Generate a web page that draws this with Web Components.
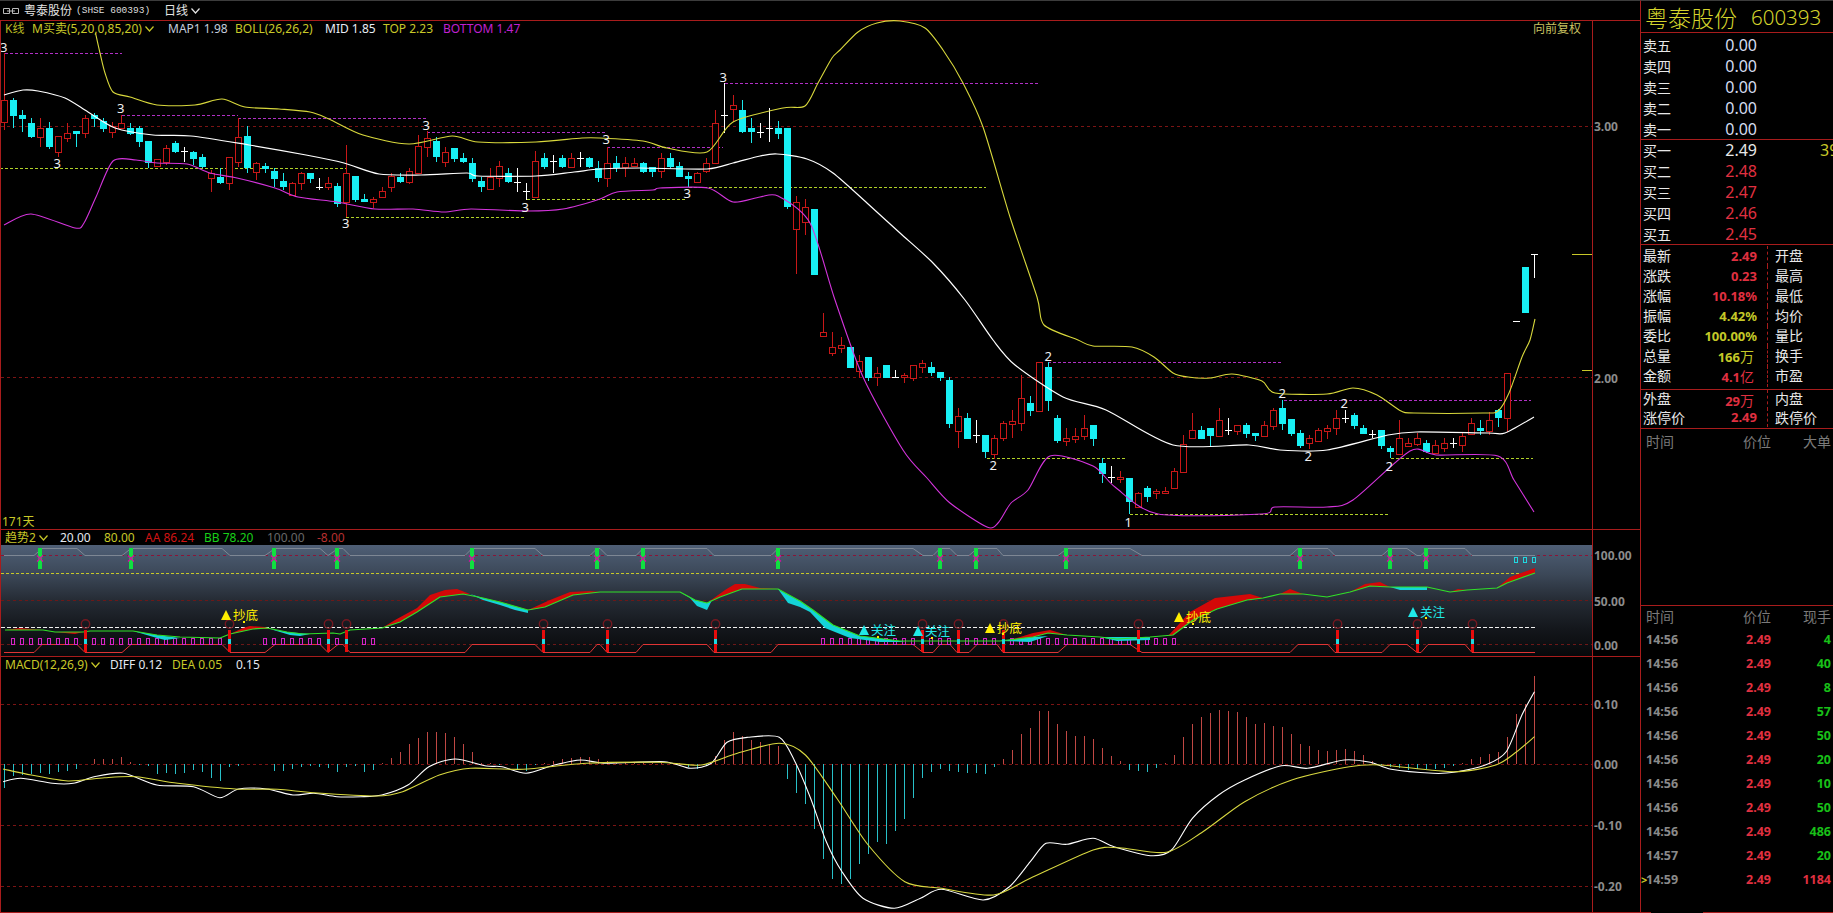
<!DOCTYPE html>
<html lang="zh"><head><meta charset="utf-8"><title>粤泰股份</title>
<style>html,body{margin:0;padding:0;background:#000;overflow:hidden}</style></head>
<body>
<ts-app></ts-app>
<script>
const FONT='"Noto Sans","Noto Sans CJK SC",sans-serif';
const RED='#a81c1c', DRED='#7c1414', YEL='#c8c828';
const chev=(c='#c8c828')=>`<svg width="9" height="6" viewBox="0 0 9 6" style="display:inline-block;vertical-align:1px;margin-left:3px"><path d="M.5 .5L4.5 5L8.5 .5" fill="none" stroke="${c}" stroke-width="1.2"/></svg>`;
function comp(name,fn){customElements.define(name,class extends HTMLElement{constructor(){super();this.attachShadow({mode:'open'}).innerHTML=fn(this)}})}
const H=(y,x1,x2,c,d)=>`<path d="M${x1} ${Math.floor(y)+.5}H${x2}" stroke="${c}" fill="none" ${d?`stroke-dasharray="${d}"`:''}/>`;
const poly=(p,c,w=1)=>`<polyline points="${p.map(a=>a.join(',')).join(' ')}" fill="none" stroke="${c}" stroke-width="${w}" stroke-linejoin="round"/>`;
const smooth=(p,c,w=1,k=.8)=>{let d=`M${p[0][0]} ${p[0][1]}`;for(let i=0;i<p.length-1;i++){const a=p[i-1]||p[i],b=p[i],e=p[i+1],f=p[i+2]||e;
 const c1=[b[0]+(e[0]-a[0])/6*k,b[1]+(e[1]-a[1])/6*k],c2=[e[0]-(f[0]-b[0])/6*k,e[1]-(f[1]-b[1])/6*k];
 d+=`C${c1[0].toFixed(1)} ${c1[1].toFixed(1)} ${c2[0].toFixed(1)} ${c2[1].toFixed(1)} ${e[0]} ${e[1]}`}
 return `<path d="${d}" fill="none" stroke="${c}" stroke-width="${w}" stroke-linejoin="round"/>`};
const fill=(p,c)=>`<polygon points="${p.map(a=>a.join(',')).join(' ')}" fill="${c}"/>`;
const T=(x,y,s,c,o='')=>`<text x="${x}" y="${y}" fill="${c}" dominant-baseline="central" ${o}>${s}</text>`;
const axis=(y,s)=>T(1594,y,s,'#8c8c8c','font-size="12" font-weight="700"');
const frame=(y1,y2)=>`<path d="M.5 ${y1}V${y2}M1592.5 ${y1}V${y2}" stroke="${RED}"/>`;

/* ---------- candle data (measured in 1/3 px with a group offset) ---------- */
const groups=[[0,[
['r',300,365,160,390],['c',300,348,295,385],['c',345,356,330,395],['c',368,412,355,415],['r',385,410,355,440],['c',384,442,365,447],['r',408,455,408,470],['r',400,415,368,425],['c',393,401,393,440],['r',355,400,345,415],['c',345,356,340,380],['c',362,386,355,395],['r',378,395,365,415],['r',370,383,345,385],['c',385,402,370,405],['c',385,425,378,440],['c',423,490,423,505],['r',476,498,476,500],['r',445,485,435,495],['c',430,455,422,458],['d',452,442,485],['c',455,477,452,495],['c',470,500,462,505],['r',520,535,510,575],['c',530,550,505,552],['r',470,550,470,570],['r',410,485,355,500],['c',408,505,378,520],['r',490,515,485,540],['c',498,507,490,520],['c',513,537,505,560],['c',544,560,520,570],['r',550,585,545,585],['r',520,550,515,570],['c',520,537,518,550],['d',560,535,570],['r',550,560,530,570],['c',558,612,548,620],['r',520,605,435,650],['c',528,600,528,605],['c',597,605,583,607],['r',598,605,590,625],['r',573,590,560,590],['r',528,560,520,575],['c',530,546,520,550],['r',513,545,505,552],['r',438,520,405,522],['r',415,440,393,470],['c',423,470,410,485],['r',455,485,440,500],['c',445,478,445,485],['c',474,487,460,490],['c',490,536,475,545],['c',543,560,530,575],['r',530,568,505,570],['r',498,535,483,560],['c',520,545,505,550],['d',545,505,575],['d',574,550,600],['r',484,590,453,592],['c',475,500,460,507],['d',484,465,520],['c',474,500,465,505],['r',475,500,460,505],['d',474,455,500],['c',474,500,470,505],['c',505,535,483,545]]],
[50,[
['r',340,385,290,410],['c',340,355,318,365],['r',340,352,320,380],['r',340,349,325,352],['c',340,365,335,370],['c',352,365,350,380],['r',325,363,310,385],['c',325,350,310,355],['c',348,380,335,380],['c',378,386,365,410],['r',370,395,365,395],['r',340,363,325,370],['r',220,340,180,342],['d',196,100,250],['r',165,176,135,215],['c',180,245,150,250],['c',235,245,205,280],['d',245,220,265],['d',235,175,275],['c',235,252,213,268],['c',235,470,235,478],['r',455,538,438,672],['r',470,515,448,555],['c',478,675,478,675]]],
[300,[
['r',97,107,40,107],['r',142,158,95,168],['r',135,143,110,160],['c',142,203,142,203],['r',182,212,165,235],['c',172,233,172,242],['r',218,232,200,258],['c',196,233,196,233],['d',232,210,233],['r',226,232,218,250],['r',196,233,195,243],['r',188,202,180,220],['c',202,218,187,228],['c',217,233,217,242],['c',240,372,232,385],['r',347,392,325,445],['c',354,416,340,416],['d',405,360,430],['c',406,455,406,475],['r',415,462,405,478],['r',370,415,362,423],['r',362,371,330,415],['r',295,370,225,392],['c',310,332,287,347]]],
[340,[
['r',67,212,67,212],['c',82,182,67,212],['c',235,303,225,310],['r',295,303,265,317],['r',287,297,265,310],['r',265,287,225,300],['c',255,297,255,317],['c',370,402,355,430],['d',410,378,430],['r',410,417,392,430],['c',415,485,415,522],['r',460,500,455,503],['c',443,470,437,485],['r',454,460,447,478],['r',452,460,442,462],['r',393,445,385,447],['r',312,395,285,400],['r',270,295,220,297],['c',270,297,258,297],['c',264,288,264,318],['r',240,287,205,287],['d',270,235,285],['r',256,272,256,285],['c',255,282,250,295],['c',280,288,280,302],['r',255,287,242,292],['r',210,257,205,270],['c',204,252,180,270],['c',238,282,238,287],['c',278,318,270,325],['r',295,310,285,327],['r',270,302,265,305],['r',265,272,255,297],['r',235,265,210,285],['d',235,210,250],['c',225,257,220,267],['c',264,282,255,282],['d',282,270,295],['c',270,318,270,327],['c',324,336,318,355],['r',295,342,240,342],['r',310,317,295,320],['r',295,312,280,317],['c',308,336,300,340],['r',316,340,300,342],['r',310,325,295,335],['d',310,295,325],['r',287,316,280,337],['r',250,282,235,285],['c',264,273,240,285],['r',240,272,215,285],['c',210,235,208,260],['r',98,235,98,275],
['d',-57,-57,-57],['c',-219,-81,-219,-81],['d',-258,-258,-186]]]];
function candles(){
  let s='',i=0;
  for(const [off,rows] of groups)for(const r of rows){
    const X=4+9*i++, t=Math.round(off+r[1]/3), b=Math.round(off+r[2]/3);
    const wt=Math.round(off+r[r[0]=='d'?2:3]/3), wb=Math.round(off+r[r[0]=='d'?3:4]/3);
    if(r[0]=='r'){
      s+=`<rect x="${X}" y="${wt}" width="1" height="${Math.max(wb-wt,1)}" fill="#c81818"/><rect x="${X-2.5}" y="${t+.5}" width="6" height="${Math.max(b-t,2)}" fill="#000" stroke="#c81818"/>`;
    }else if(r[0]=='c'){
      s+=`<rect x="${X}" y="${wt}" width="1" height="${Math.max(wb-wt,1)}" fill="#1ce8ec"/><rect x="${X-3}" y="${t}" width="7" height="${Math.max(b-t,2)}" fill="#18f0f4"/>`;
    }else{
      s+=`<rect x="${X}" y="${wt}" width="1" height="${Math.max(wb-wt,1)}" fill="#fff"/><rect x="${X-3}" y="${t}" width="7" height="1" fill="#fff"/>`;
    }
  }
  return `<g shape-rendering="crispEdges">${s}</g>`;
}
const TOP=[[95.5,33],[100,53],[105,73],[113,92],[130,97],[157,105],[195,105],[222,99],[245,107],[279,109],[310,112],[329,119],[363,135],[409,144],[452,136],[478,142],[536,142],[582,138],[600,138],[643,141],[667,148],[707,152],[733,122],[783,108],[805,106],[818,83],[832,58],[840,50],[858,32],[877,23],[900,21],[925,28],[943,50],[963,83],[983,127],[1010,217],[1037,297],[1044,325],[1078,340],[1093,346],[1132,347],[1154,357],[1173,373],[1188,377],[1210,378],[1232,374],[1262,381],[1275,393],[1327,394],[1353,388],[1377,395],[1401,411],[1414,413],[1483,413],[1498,411],[1509,393],[1522,357],[1530,340],[1535,319]];
const MID=[[4,95],[23,90],[38,91],[65,98],[88,112],[115,128],[153,135],[191,136],[249,145],[306,155],[344,163],[379,174],[421,175],[467,173],[478,176],[536,176],[574,172],[600,169],[640,168],[707,169],[733,163],[760,156],[777,154],[807,159],[833,173],[867,203],[900,233],[933,263],[965,300],[993,340],[1015,365],[1063,397],[1106,410],[1173,445],[1249,445],[1280,450],[1327,450],[1388,435],[1416,432],[1488,433],[1505,433],[1534,417]];
const BOT=[[4,225],[31,214],[75,228],[84,223],[96,197],[113,161],[136,160],[157,163],[187,164],[210,173],[237,178],[275,188],[298,197],[337,202],[375,209],[413,209],[444,212],[471,209],[528,211],[563,209],[600,199],[617,192],[653,190],[660,188],[708,188],[733,202],[760,197],[778,196],[810,223],[835,300],[863,377],[903,450],[927,478],[950,503],[987,527],[998,523],[1011,503],[1028,490],[1050,456],[1093,466],[1115,487],[1158,514],[1262,514],[1275,507],[1327,507],[1353,500],[1410,451],[1436,455],[1498,456],[1514,480],[1534,512]];
const DM='#b030c4', DG='#b0d028';
const DASH=[[5,122,53,DM],[122,238,115,DM],[238,426,118,DM],[427,605,132,DM],[607,723,147,DM],[725,1039,83,DM],[1048,1282,362,DM],[1284,1531,400,DM],
[0,346,168,DG],[346,524,217,DG],[527,687,199,DG],[689,986,187,DG],[987,1126,458,DG],[1130,1390,514,DG],[1391,1533,458,DG]];
const NUMS=[[3.5,47,3],[120.5,108,3],[57,163,3],[345.6,223,3],[426,125,3],[525,207,3],[723,77,3],[606,139,3],[687,193,3],[993,465,2],[1048,356,2],[1128,522,1],[1282,393,2],[1308,456,2],[1344,403,2],[1389,466,2]];

comp('ts-legend',()=>`<style>:host{display:flex;align-self:start;height:16px;padding-left:5px;font:12px/16px ${FONT};white-space:nowrap;z-index:1}
::slotted(span){flex:none}</style><slot></slot>`);

const items=a=>a.map(([w,c,s])=>`<span style="width:${w}px;color:${c}">${s}</span>`).join('');

comp('ts-titlebar',()=>`<style>:host{display:flex;align-items:center;height:19px;flex:none;border-bottom:1px solid ${RED};font:12px/19px ${FONT};color:#e4e4e4;white-space:nowrap}
.i{margin:0 5px 0 3px;display:block}.m{font:9.5px "Liberation Mono",monospace;margin-left:4px;width:88px;color:#ddd}</style>
<svg class="i" width="16" height="8" viewBox="0 0 16 8"><path d="M.5 1.5h6v5h-6zM9.5 1.5h6v5h-6zM4 4h8" fill="none" stroke="#bbb"/></svg>
<span>粤泰股份</span><span class="m">(SHSE 600393)</span><span>日线</span>${chev('#e4e4e4')}`);

comp('ts-kline',()=>`<style>:host{display:grid;height:508px;flex:none;border-bottom:1px solid ${RED}}
:host>*{grid-area:1/1}svg{display:block;overflow:visible;font-family:${FONT}}
.r{margin-left:auto;font-size:12px;color:#c8c060;width:59px;white-space:nowrap}
ts-legend{width:1587px}</style>
<svg width="1640" height="508" viewBox="0 21 1640 508">
${H(126,1,1592,DRED,'3 3')}${H(377,1,1592,DRED,'3 3')}
${DASH.map(d=>H(d[2],d[0],d[1],d[3],'3 2')).join('')}
${candles()}
${smooth(TOP,'#d8d83c',1.1)}${smooth(MID,'#fff',1.2)}${smooth(BOT,'#d434dc',1.1)}
${NUMS.map(n=>T(n[0]-3.5,n[1],n[2],'#f0f0f0','font-size="13"')).join('')}
${T(2,521,'171天',YEL,'font-size="12"')}
${frame(21,529)}
${axis(126,'3.00')}${axis(378,'2.00')}
${H(254,1572,1592,YEL)}${H(370,1582,1592,YEL)}
</svg>
<ts-legend>${items([[27,'#b8b820','K线'],[136,YEL,'M买卖(5,20,0,85,20)'+chev()],[67,'#c4ccdc','MAP1 1.98'],[90,YEL,'BOLL(26,26,2)'],[58,'#e8ecf4','MID 1.85'],[60,YEL,'TOP 2.23'],[90,'#c020d0','BOTTOM 1.47']])}<span class="r">向前复权</span></ts-legend>`);

/* indicator */
const SIG=[40,131,274,337,472,597,643,778,940,976,1066,1300,1390,1426];
const PINS=[85,229,328,346,543,607,715,922,958,1003,1138,1337,1417,1472];
const GRAY=[[4,0],[34,0],[42,1],[77,1],[85,0],[122,0],[131,1],[222,1],[230,0],[265,0],[275,1],[320,1],[328,0],[338,1],[343,1],[350,0],[465,0],[472,1],[535,1],[543,0],[590,0],[597,1],[600,1],[607,0],[636,0],[643,1],[707,1],[714,0],[771,0],[778,1],[913,1],[923,0],[933,0],[940,1],[950,1],[957,0],[969,0],[977,1],[997,1],[1003,0],[1058,0],[1067,1],[1130,1],[1142,0],[1290,0],[1298,1],[1328,1],[1335,0],[1382,0],[1390,1],[1407,1],[1417,0],[1421,0],[1428,1],[1465,1],[1472,0],[1535,0]];
const BB=[[5,630],[43,630],[55,632],[83,632],[90,631],[133,631],[157,635],[180,637],[220,638],[230,634],[253,629],[267,628],[287,632],[303,634],[333,633],[340,634],[350,630],[382,628],[400,622],[417,612],[440,597],[463,594],[483,598],[500,602],[528,610],[545,607],[573,595],[600,592],[680,592],[695,600],[707,603],[720,597],[742,589],[778,589],[800,601],[813,610],[833,625],[860,636],[900,641],[1000,641],[1033,637],[1048,633],[1067,635],[1100,637],[1117,639],[1150,637],[1173,635],[1193,620],[1217,609],[1247,600],[1263,598],[1280,594],[1303,594],[1327,597],[1350,592],[1370,586],[1390,587],[1427,587],[1450,592],[1467,590],[1497,588],[1507,583],[1535,573]];
const RF=[[[5,630],[20,628],[43,630]],[[55,632],[75,634],[83,632]],[[230,634],[243,628],[250,626],[265,627],[270,629],[253,629]],[[382,628],[395,620],[417,608],[430,595],[445,590],[457,589],[470,594],[463,594],[440,597],[417,612],[400,622]],[[528,610],[550,600],[570,592],[590,591],[600,592],[573,595],[545,607]],[[707,603],[725,590],[735,584],[745,584],[760,588],[778,589],[742,589],[720,597]],[[1010,640],[1033,633],[1050,630],[1067,635],[1048,633],[1033,637]],[[1168,636],[1190,612],[1215,598],[1250,594],[1263,598],[1247,600],[1217,609],[1193,620],[1173,635]],[[1280,594],[1290,589],[1303,594]],[[1350,592],[1365,584],[1380,582],[1390,587],[1370,586]],[[1450,592],[1458,589],[1467,590]],[[1497,588],[1510,577],[1535,568],[1535,573],[1507,583]]];
const CF=[[[133,631],[157,638],[165,640],[180,638],[157,635]],[[270,629],[290,635],[300,636],[310,634],[287,632]],[[470,594],[483,600],[500,605],[515,610],[528,613],[528,610],[500,602],[483,598]],[[680,592],[690,598],[697,606],[707,610],[712,600],[707,603],[695,600]],[[778,589],[788,603],[800,607],[810,612],[825,628],[850,638],[880,642],[905,642],[900,641],[860,636],[833,625],[813,610],[800,601]],[[1000,641],[1030,642],[1048,636],[1033,637]],[[1100,637],[1117,641],[1150,640],[1150,637]],[[1390,587],[1400,590],[1427,590],[1427,587]]];
const MAG=[13,22,31,40,49,58,67,76];for(let x=94;x<=220;x+=9)MAG.push(x);for(let x=265;x<=319;x+=9)MAG.push(x);MAG.push(337,364,373);
for(let x=823;x<=913;x+=9)MAG.push(x);MAG.push(931,940,949,967,976,985,994);for(let x=1012;x<=1129;x+=9)MAG.push(x);MAG.push(1147,1156,1165,1174);
const tags=[[226,615,'抄底','#ffee00',1],[864,630,'关注','#20e8e8',0],[918,631,'关注','#20e8e8',0],[990,628,'抄底','#ffee00',1],[1179,617,'抄底','#ffee00',1],[1413,612,'关注','#20e8e8',0]];
comp('ts-indicator',()=>`<style>:host{display:grid;height:126px;flex:none;border-bottom:1px solid ${RED};overflow:hidden}
:host>*{grid-area:1/1}svg{display:block;font-family:${FONT}}</style>
<svg width="1640" height="126" viewBox="0 530 1640 126">
<defs><linearGradient id="g" x1="0" y1="0" x2="0" y2="1"><stop offset="0" stop-color="#4f5f76"/><stop offset=".27" stop-color="#3b4757"/><stop offset=".5" stop-color="#252b34"/><stop offset=".75" stop-color="#14171c"/><stop offset="1" stop-color="#07080a"/></linearGradient></defs>
<rect x="1" y="545" width="1591" height="111" fill="url(#g)"/>
${H(555,1,1592,'#8a1438','3 3')}${H(573,1,1535,'#c8c828','3 2')}${H(600,1,1592,'#6c1818','3 3')}${H(627,1,1535,'#f0f0f0','4 2')}${H(644,1,1592,'#6c1818','3 3')}
${poly(GRAY.map(([x,u])=>[x,u?548.5:555.5]),'#7e8794')}
${poly(GRAY.map(([x,u])=>[x,u?644.5:652.5]),'#e03434')}
${SIG.map(x=>`<rect x="${x-2}" y="548" width="4" height="21" fill="#10e040"/><path d="M${x-3} 555.5l6 6M${x+3} 555.5l-6 6" stroke="#d010a0" stroke-width="1.4"/>`).join('')}
${MAG.map(x=>`<rect x="${x-1.5}" y="638.5" width="3" height="6" fill="none" stroke="#d824c8"/>`).join('')}
${[1516,1525,1534].map(x=>`<rect x="${x-1.5}" y="557.5" width="3" height="5" fill="none" stroke="#20d8e0"/>`).join('')}
${RF.map(p=>fill(p,'#d40808')).join('')}${CF.map(p=>fill(p,'#14d4d8')).join('')}
${poly(BB,'#30e028',1.2)}
${PINS.map(x=>`<circle cx="${x+.5}" cy="624" r="4.2" fill="none" stroke="#741820" stroke-width="1.4"/><rect x="${x-1}" y="630" width="3" height="22" fill="#e80c0c"/><rect x="${x-1}" y="639" width="3" height="5" fill="#20d8e0"/>`).join('')}
${tags.map(([x,y,s,c])=>`<polygon points="${x-5},${y+5} ${x+5},${y+5} ${x},${y-5}" fill="${c}"/>`+T(x+7,y,s,c,'font-size="12.5"')).join('')}
${[[877,636],[931,637],[1002,633],[1425,617],[1192,623],[243,621]].map(p=>`<rect x="${p[0]}" y="${p[1]}" width="2" height="2" fill="#ffee00"/>`).join('')}
${frame(530,656)}
${axis(555,'100.00')}${axis(601,'50.00')}${axis(645,'0.00')}
</svg>
<ts-legend>${items([[55,YEL,'趋势2'+chev()],[44,'#e4e8f0','20.00'],[41,YEL,'80.00'],[59,'#d01414','AA 86.24'],[63,'#18d018','BB 78.20'],[50,'#686868','100.00'],[60,'#b83030','-8.00']])}</ts-legend>`);

/* MACD */
const HIST=[-24,-12,-11,-10,-9,-10,-8,-7,-5,0,5,5,5,7,2,-1,-2,-10,-9,-10,-9,-6,-8,-14,-17,-3,-2,0,0,0,-7,-7,-5,-3,-2,-3,-4,-8,-3,-2,-8,-6,1,6,12,20,26,32,32,31,27,20,12,1,1,-1,0,-5,-7,-1,1,3,5,6,7,7,5,3,2,1,1,1,1,1,1,1,-3,-5,-2,8,24,32,28,24,22,20,18,-15,-29,-40,-65,-95,-115,-120,-115,-100,-90,-78,-80,-67,-55,-34,-14,-8,-5,-7,-8,-9,-9,-10,-3,5,14,30,36,53,53,40,33,28,28,25,16,8,3,-6,-7,-8,-4,1,9,27,40,47,51,54,53,52,47,40,41,38,37,30,20,18,14,13,14,15,13,9,3,-1,-3,-4,-6,-5,-5,-5,-4,-2,1,5,7,10,12,27,50,60,88];
const z=a=>a.map(([x,y])=>[+(x*1.046).toFixed(1),+(655+y/3).toFixed(1)]);
const DIFF=z([[3,380],[20,370],[50,385],[70,385],[90,365],[118,355],[150,390],[185,395],[210,428],[228,402],[255,402],[280,420],[300,415],[322,425],[345,425],[365,420],[390,390],[410,335],[435,312],[465,333],[480,335],[503,355],[530,330],[555,315],[580,325],[635,320],[660,340],[680,325],[695,262],[715,247],[745,247],[760,320],[775,430],[790,560],[805,650],[825,730],[855,760],[880,730],[900,703],[940,735],[965,695],[985,620],[1000,565],[1020,568],[1045,550],[1065,575],[1100,602],[1120,585],[1140,490],[1165,420],[1190,375],[1225,332],[1250,340],[1285,315],[1310,322],[1330,343],[1370,355],[1390,352],[1420,330],[1440,290],[1455,180],[1467,110]]);
const DEA=z([[3,342],[30,360],[65,378],[100,368],[130,365],[170,385],[225,402],[265,403],[300,413],[360,423],[385,410],[420,360],[450,340],[500,343],[560,325],[630,322],[670,330],[705,295],[745,265],[770,300],[800,430],[830,570],[865,680],[900,700],[950,720],[985,670],[1045,585],[1070,578],[1115,592],[1150,530],[1190,440],[1235,375],[1290,335],[1320,330],[1390,350],[1430,330],[1450,290],[1467,245]]);
comp('ts-macd',()=>`<style>:host{display:grid;height:255px;flex:none;border-bottom:1px solid ${RED};overflow:hidden}
:host>*{grid-area:1/1}svg{display:block;font-family:${FONT}}</style>
<svg width="1640" height="255" viewBox="0 657 1640 255">
${[704,764,825,886].map(y=>H(y,1,1592,DRED,'3 3')).join('')}
<g shape-rendering="crispEdges">${HIST.map((h,i)=>h?`<rect x="${4+9*i}" y="${h>0?764-h:764}" width="1" height="${Math.abs(h)}" fill="${h>0?'#c04844':'#28c0c8'}"/>`:'').join('')}</g>
${smooth(DIFF,'#fff',1.1)}${smooth(DEA,'#d8d840',1.1)}
${frame(657,912)}
${axis(704,'0.10')}${axis(764,'0.00')}${axis(825,'-0.10')}${axis(886,'-0.20')}
</svg>
<ts-legend>${items([[105,YEL,'MACD(12,26,9)'+chev()],[62,'#e4e8f0','DIFF 0.12'],[64,YEL,'DEA 0.05'],[40,'#e4e8f0','0.15']])}</ts-legend>`);

comp('ts-charts',()=>`<style>:host{display:flex;flex-direction:column;width:1640px;flex:none;height:913px;box-sizing:border-box;border-top:1px solid #3c3c3c}</style>
<ts-titlebar></ts-titlebar><ts-kline></ts-kline><ts-indicator></ts-indicator><ts-macd></ts-macd>`);

/* right side */
const RV='#e03040', WV='#d4dcf0', YV='#c4c828';
comp('q-head',()=>`<style>:host{display:flex;align-items:center;height:32px;box-sizing:border-box;border-bottom:1px solid ${RED};padding-left:4px;color:#d4d42c;white-space:nowrap;flex:none;font-family:${FONT}}
.a{font-size:23px;font-weight:300;width:106px}.b{font-size:20.5px;font-weight:300}</style><span class="a">粤泰股份</span><span class="b">600393</span>`);
comp('q-book',el=>{
 const rows=JSON.parse(el.getAttribute('rows'));
 return `<style>:host{display:block;box-sizing:border-box;border-bottom:1px solid ${RED};height:${el.getAttribute('h')}px;padding-top:${el.getAttribute('pt')}px;flex:none;font-family:${FONT}}
 .r{display:grid;grid-template-columns:116px 1fr;height:21px;line-height:21px;padding-left:2px;white-space:nowrap}
 .l{font-size:14px;color:#e8e8e8;display:flex;justify-content:space-between;width:114px}
 b{font-weight:400;font-size:16px}.x{color:${YEL};font-size:16px;padding-left:61px;overflow:hidden}</style>`+
 rows.map(r=>`<div class="r"><div class="l"><span>${r[0]}</span><b style="color:${r[2]}">${r[1]}</b></div><div class="x">${r[3]||''}</div></div>`).join('');
});
comp('q-stats',el=>{
 const rows=JSON.parse(el.getAttribute('rows')), hs=JSON.parse(el.getAttribute('hs'));
 return `<style>:host{display:block;flex:none;font-family:${FONT}}
 .w{box-sizing:border-box;border-bottom:1px solid ${RED};padding-left:2px}
 .r{display:grid;grid-template-columns:124px 1fr;white-space:nowrap}
 .l{font-size:14px;color:#e8e8e8;display:flex;justify-content:space-between;box-sizing:border-box;width:114px}
 .l b{font-size:13px;font-weight:700}.l b.pad{padding-right:3px}.l b i{font:400 14px "Noto Sans CJK SC",sans-serif}
 .c{border-left:1px dashed ${RED};padding-left:7px;font-size:14px;color:#e8e8e8}</style><div class="w" style="height:${el.getAttribute('h')}px;padding-top:${el.getAttribute('pt')||0}px">`+
 rows.map((r,i)=>`<div class="r" style="height:${hs[i]}px;line-height:${hs[i]}px"><div class="l"><span>${r[0]}</span><b class="${r[3]?'pad':''}" style="color:${r[2]}">${r[1]}</b></div><div class="c">${r[4]||''}</div></div>`).join('')+`</div>`;
});
comp('q-ticks',el=>{
 const vols=[4,40,8,57,50,20,10,50,486,20,1184];
 const st=`<style>:host{display:block;font-family:${FONT};flex:none}
 .h,.t{display:grid;grid-template-columns:60px 70px 60px;white-space:nowrap}
 .h{font-size:14px;color:#7a7a7a;height:var(--hh);line-height:var(--hh)}
 .h span:first-child{padding-left:5px}.h span+span{text-align:right}
 .t{height:24px;line-height:24px;font-size:12.5px;font-weight:700}
 .t span:first-child{color:#8a8a8a;display:flex}.t span+span{text-align:right}
 i{font-style:normal;color:${YEL};width:5px;flex:none;font-size:11px}
 .s{box-sizing:border-box;height:177px;border-bottom:1px solid ${RED}}</style>`;
 if(el.hasAttribute('big'))return st+`<div class="s" style="--hh:25px"><div class="h"><span>时间</span><span>价位</span><span>大单</span></div></div>`;
 return st+`<div style="--hh:22px"><div class="h"><span>时间</span><span>价位</span><span>现手</span></div>`+
 vols.map((v,i)=>`<div class="t"><span><i>${i==10?'&gt;':''}</i>${i==9?'14:57':i==10?'14:59':'14:56'}</span><span style="color:${RV}">2.49</span><span style="color:${i==10?RV:'#18c018'}">${v}</span></div>`).join('')+`</div>`;
});
comp('q-foot',()=>`<style>:host{display:flex;height:1px;margin-top:auto;flex:none}span{display:block;background:${RED}}</style><span style="width:10px"></span><span style="width:52px;background:#000"></span><span style="flex:1"></span>`);
comp('ts-quote',()=>{
 const j=o=>JSON.stringify(o).replace(/"/g,'&quot;');
 const sell=['卖五','卖四','卖三','卖二','卖一'].map(l=>[l,'0.00',WV]);
 const buy=[['买一','2.49','#e8e8e8','39'],['买二','2.48',RV],['买三','2.47',RV],['买四','2.46',RV],['买五','2.45',RV]];
 const wan=s=>s.replace(/[万亿]/,m=>`<i>${m}</i>`);
 const s1=[['最新','2.49',RV,0,'开盘'],['涨跌','0.23',RV,0,'最高'],['涨幅','10.18%',RV,0,'最低'],['振幅','4.42%',YV,0,'均价'],['委比','100.00%',YV,0,'量比'],['总量',wan('166万'),YV,1,'换手'],['金额',wan('4.1亿'),RV,1,'市盈']];
 const s2=[['外盘',wan('29万'),RV,1,'内盘'],['涨停价','2.49',RV,0,'跌停价']];
 return `<style>:host{display:flex;flex-direction:column;width:193px;height:913px;flex:none;box-sizing:border-box;border-left:1px solid ${RED};border-top:1px solid #3c3c3c;overflow:hidden}</style>
 <q-head></q-head>
 <q-book rows="${j(sell)}" h="107" pt="2"></q-book>
 <q-book rows="${j(buy)}" h="105" pt="0"></q-book>
 <q-stats rows="${j(s1)}" hs="[20,20,20,20,20,20,20]" h="145" pt="1"></q-stats>
 <q-stats rows="${j(s2)}" hs="[18,19]" h="39" pt="0"></q-stats>
 <q-ticks big></q-ticks><q-ticks></q-ticks><q-foot></q-foot>`;
});
comp('ts-app',()=>`<style>:host{display:flex;width:1833px;height:913px;background:#000;overflow:hidden}</style><ts-charts></ts-charts><ts-quote></ts-quote>`);
</script>
</body></html>
